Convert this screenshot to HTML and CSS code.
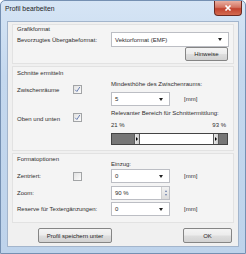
FILE: index.html
```html
<!DOCTYPE html>
<html>
<head>
<meta charset="utf-8">
<link rel="stylesheet" href="styles.css">
</head>
<body>
<div class="window">
  <div class="titlebar">
    <span class="title">Profil bearbeiten</span>
    <div class="close"><svg width="8" height="6" viewBox="0 0 8 6"><path d="M1.5 0.5 L6.5 5.5 M6.5 0.5 L1.5 5.5" stroke="#fff" stroke-width="1.6"/></svg></div>
  </div>
  <div class="client">
    <div class="panel g1">
      <div class="gtitle">Grafikformat</div>
      <div class="row fmt">
        <span class="lbl">Bevorzugtes Übergabeformat:</span>
        <div class="combo wide"><span>Vektorformat (EMF)</span><i class="arrow"></i></div>
      </div>
      <div class="row end"><div class="btn hint">Hinweise</div></div>
    </div>

    <div class="panel g2">
      <div class="gtitle">Schnitte ermitteln</div>
      <div class="grow ra">
        <span class="lbl l-a">Zwischenräume</span>
        <span class="cb on l-a"><svg width="7" height="7" viewBox="0 0 7 7"><path d="M1.2 3.8 L2.9 5.5 L5.8 1" fill="none" stroke="#6a80b4" stroke-width="1"/></svg></span>
        <div class="field">
          <div class="cap">Mindesthöhe des Zwischenraums:</div>
          <div class="frow"><div class="combo small"><span>5</span><i class="arrow"></i></div><span class="unit">[mm]</span></div>
        </div>
      </div>
      <div class="grow rb">
        <span class="lbl l-b">Oben und unten</span>
        <span class="cb on l-b"><svg width="7" height="7" viewBox="0 0 7 7"><path d="M1.2 3.8 L2.9 5.5 L5.8 1" fill="none" stroke="#6a80b4" stroke-width="1"/></svg></span>
        <div class="field">
          <div class="cap">Relevanter Bereich für Schnittermittlung:</div>
          <div class="pct"><span>21 %</span><span>93 %</span></div>
          <div class="slider">
            <div class="seg dark" style="width:22px"></div>
            <div class="knob"><i class="tri-r"></i></div>
            <div class="seg light"></div>
            <div class="knob"><i class="tri-r"></i></div>
            <div class="seg dark" style="width:8px"></div>
          </div>
        </div>
      </div>
    </div>

    <div class="panel g3">
      <div class="g3head">
        <div class="gtitle">Formatoptionen</div>
        <div class="einzug">Einzug:</div>
      </div>
      <div class="grow3">
        <span class="lbl">Zentriert:</span>
        <span class="cb"></span>
        <div class="frow"><div class="combo small"><span>0</span><i class="arrow"></i></div><span class="unit">[mm]</span></div>
      </div>
      <div class="grow3">
        <span class="lbl">Zoom:</span>
        <span></span>
        <div class="frow"><div class="combo small spin"><span>90 %</span><div class="spinbtn"><i class="up"></i><i class="down"></i></div></div></div>
      </div>
      <div class="grow3">
        <span class="lbl wide-lbl">Reserve für Textergänzungen:</span>
        <div class="frow"><div class="combo small"><span>0</span><i class="arrow"></i></div><span class="unit">[mm]</span></div>
      </div>
    </div>

    <div class="buttons">
      <div class="btn save">Profil speichern unter</div>
      <div class="btn ok">OK</div>
    </div>
  </div>
</div>
</body>
</html>
```
FILE: styles.css
```css
* { box-sizing: border-box; }
html, body { margin: 0; padding: 0; }
body {
  width: 246px; height: 254px; overflow: hidden;
  background: #ffffff;
  font-family: "Liberation Sans", Arial, sans-serif;
  font-size: 6px;
  color: #2e2e2e;
}
.window {
  width: 246px; height: 254px;
  border: 1px solid #7590b2;
  border-radius: 5px 5px 0 0;
  background: linear-gradient(#d6e5f5, #c4d8ee 30%, #bed3eb);
  padding: 0 6px 6px 6px;
  display: flex; flex-direction: column;
}
.titlebar {
  height: 20px;
  display: flex; align-items: flex-start;
}
.title { font-size: 6.8px; margin: 4px 0 0 -2px; color: #1e1e1e; }
.close {
  margin-left: auto; margin-right: -3px;
  width: 28px; height: 15px;
  border: 1px solid #6b2a22;
  border-top: none;
  border-radius: 0 0 4px 4px;
  background: linear-gradient(#eab0a2, #d47462 45%, #c2432f 55%, #d36b50);
  display: flex; align-items: center; justify-content: center;
}
.client {
  flex: 1;
  background: #f0f0f0;
  border: 1px solid #a3b5cc;
  padding: 2px 4px 0 4px;
  display: flex; flex-direction: column;
}
.panel {
  background: #f4f4f4;
  border: 1px solid #e2e2e2;
  padding-left: 4px;
}
.g1 { height: 40px; padding-top: 0; }
.g2 { height: 85px; margin-top: 2px; padding-top: 2px; }
.g3 { height: 70px; margin-top: 2px; padding-top: 1px; }
.gtitle { height: 8px; line-height: 8px; }
.g1 .gtitle { height: 7px; line-height: 9px; }
.row { display: flex; align-items: center; }
.fmt { height: 15px; }
.fmt .lbl { width: 94px; }
.end { justify-content: flex-end; padding-right: 5px; }
.combo {
  height: 15px;
  background: #fff;
  border: 1px solid #bcbec4;
  display: flex; align-items: center;
  padding-left: 3px;
  position: relative;
}
.combo.wide { width: 118px; }
.combo.small { width: 59px; height: 14px; }
.arrow {
  margin-left: auto; margin-right: 6px;
  width: 0; height: 0;
  border-left: 2.5px solid transparent;
  border-right: 2.5px solid transparent;
  border-top: 3px solid #222;
}
.btn {
  height: 15px;
  border: 1px solid #858585;
  border-radius: 2px;
  background: linear-gradient(#f4f4f4, #ececec 48%, #dedede 52%, #d2d2d2);
  display: flex; align-items: center; justify-content: center;
  color: #1e1e1e;
}
.hint { width: 43px; height: 14px; }
.grow {
  display: grid;
  grid-template-columns: 56px 38px 1fr;
  align-items: start;
}
.ra { margin-top: 3px; height: 29px; }
.rb { margin-top: 0; }
.l-a { margin-top: 6px; }
.l-b { margin-top: 6px; }
.lbl { white-space: nowrap; line-height: 8px; }
.cb {
  width: 9px; height: 9px;
  border: 1px solid #a2a4a6;
  background: linear-gradient(135deg, #e2e2e2, #fbfbfb);
  display: flex; align-items: center; justify-content: center;
}
.l-a.cb { margin-top: 5px; }
.l-b.cb { margin-top: 4px; }
.field { display: flex; flex-direction: column; }
.cap { height: 8px; line-height: 8px; margin-bottom: 4px; }
.frow { display: flex; align-items: center; }
.unit { margin-left: 14px; }
.pct { display: flex; justify-content: space-between; width: 115px; height: 8px; line-height: 8px; margin-bottom: 4px; }
.slider {
  width: 117px; height: 12px;
  border: 1px solid #444;
  display: flex;
}
.seg.dark { background: #767676; }
.seg.light { flex: 1; background: #fff; }
.knob {
  width: 6px;
  background: linear-gradient(90deg, #e6e6e6, #cfcfcf);
  border-left: 1px solid #5a5a5a;
  border-right: 1px solid #5a5a5a;
  display: flex; align-items: center; justify-content: center;
}
.tri-r {
  width: 0; height: 0;
  border-top: 2px solid transparent;
  border-bottom: 2px solid transparent;
  border-left: 2px solid #000;
}
.g3head { display: flex; height: 13px; }
.g3head .gtitle { width: 94px; }
.einzug { margin-top: 5px; line-height: 8px; height: 8px; }
.grow3 {
  display: grid;
  grid-template-columns: 56px 38px 1fr;
  align-items: center;
  height: 16.5px;
}
.grow3 .wide-lbl { grid-column: 1 / 3; }
.spin { padding-right: 0; }
.spinbtn {
  margin-left: auto; width: 8px; height: 12px;
  background: linear-gradient(#f2f2f2, #dcdcdc);
  border-left: 1px solid #d0d0d0;
  display: flex; flex-direction: column; align-items: center; justify-content: space-around;
  padding: 2px 0;
}
.up, .down { width: 0; height: 0; border-left: 1.5px solid transparent; border-right: 1.5px solid transparent; }
.up { border-bottom: 2px solid #6a7ea8; }
.down { border-top: 2px solid #6a7ea8; }
.buttons {
  display: flex; align-items: center;
  margin-top: 5px;
  padding-left: 26px;
}
.save { width: 74px; }
.ok { width: 49px; margin-left: auto; margin-right: 2px; }
```
